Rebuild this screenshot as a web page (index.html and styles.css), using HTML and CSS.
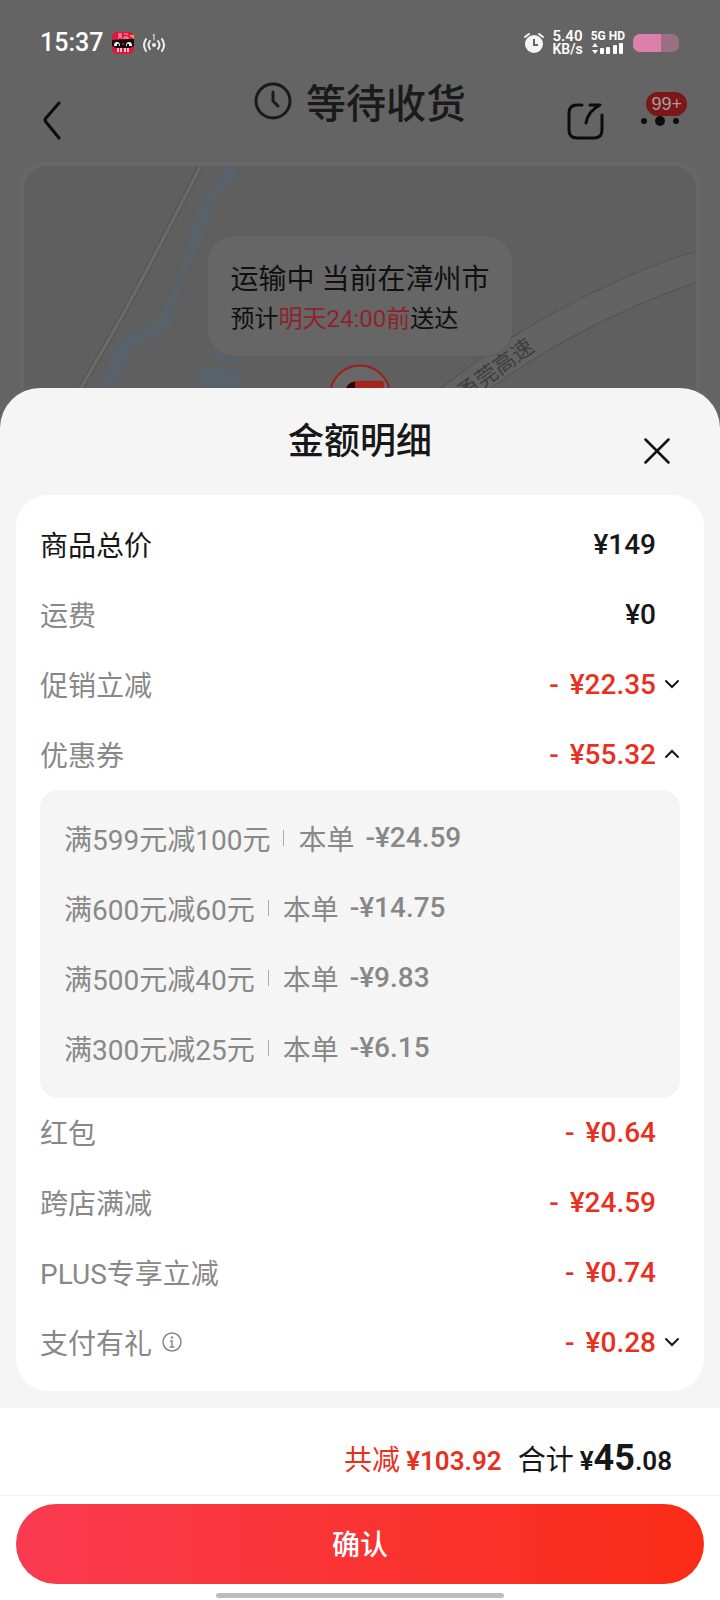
FILE: index.html
```html
<!DOCTYPE html>
<html lang="zh-CN">
<head>
<meta charset="utf-8">
<meta name="viewport" content="width=device-width, initial-scale=1">
<title>金额明细</title>
<link rel="stylesheet" href="styles.css">
</head>
<body>
<div class="screen">
  <section class="order">
    <div class="status">
      <div class="status-side">
        <span class="time">15:37</span>
        <svg class="mascot" width="24" height="24" viewBox="0 0 24 24" aria-hidden="true">
          <rect x="1" y="1" width="22" height="22" rx="5" fill="#e3173e"/>
          <path d="M18 4l5 0v4z" fill="#e8a33a"/>
          <path d="M7 3h4M7 5h4M9 3v2l-2 3M9 5l2 3M13 3h4M13 6h4v2h-4z" stroke="#f7a6b4" fill="none"/>
          <path d="M1 9q11-1 22-1v7l-4 2H5l-4-2z" fill="#15090c"/>
          <path d="M3 15q0-4 3-4t3 4zM15 15q0-4 3-4t3 4z" fill="#fff"/>
          <circle cx="7" cy="14" r="1.200" fill="#15090c"/><circle cx="17" cy="14" r="1.200" fill="#15090c"/>
          <circle cx="12" cy="13" r="1" fill="#e3173e"/>
          <path d="M7 17v4M10 17v4M14 17v4M17 17v4" stroke="#fff" stroke-width="1.500"/>
        </svg>
        <svg width="22" height="22" viewBox="0 0 22 22" fill="none" stroke="#eee" stroke-width="2" stroke-linecap="round" aria-hidden="true">
          <circle cx="11" cy="13" r="2" fill="#eee" stroke="none"/>
          <path d="M7 9q-3 4 0 8M15 9q3 4 0 8M3 7q-4 6 0 12M19 7q4 6 0 12"/>
          <path d="M10 3l1-1v6" stroke-width="1"/>
        </svg>
      </div>
      <div class="status-side">
        <svg width="20" height="22" viewBox="0 0 20 22" aria-hidden="true">
          <circle cx="10" cy="12" r="9" fill="#f4f4f4"/>
          <path d="M1 5l4-3M19 5l-4-3" stroke="#f4f4f4" stroke-width="2" stroke-linecap="round"/>
          <path d="M10 7v6h4" stroke="#646464" stroke-width="2" fill="none"/>
        </svg>
        <div class="speed"><span class="speed-num">5.40</span><span>KB/s</span></div>
        <div class="network">
          <span>5G HD</span>
          <svg width="32" height="12" viewBox="0 0 32 12" fill="#fff" aria-hidden="true">
            <path d="M4 0l3 4H1zM4 11L1 7h6z"/>
            <rect x="9" y="5" width="4" height="6" rx="1"/><rect x="15" y="4" width="4" height="7" rx="1"/><rect x="22" y="2" width="4" height="9" rx="1"/><rect x="28" y="0" width="4" height="11" rx="1"/>
          </svg>
        </div>
        <div class="battery"><div class="battery-level"></div></div>
      </div>
    </div>

    <header class="topbar">
      <button class="icon-btn back" type="button" aria-label="返回">
        <svg width="18" height="40" viewBox="0 0 18 40" fill="none" stroke="#0c0c0c" stroke-width="3" stroke-linecap="round" stroke-linejoin="round"><path d="M16 3L3 18q-2 2 0 4l13 16"/></svg>
      </button>
      <h1 class="order-state">
        <svg width="38" height="38" viewBox="0 0 38 38" fill="none" stroke="#1a1a1a" stroke-width="3" stroke-linecap="round" stroke-linejoin="round" aria-hidden="true"><circle cx="19" cy="19" r="17"/><path d="M19 10v9l5 5"/></svg>
        等待收货
      </h1>
      <div class="actions">
        <button class="icon-btn" type="button" aria-label="分享">
          <svg width="38" height="38" viewBox="0 0 38 38" fill="none" stroke="#0c0c0c" stroke-width="3" stroke-linecap="round" stroke-linejoin="round"><path d="M16 3h-5Q3 3 3 11v17q0 8 8 8h17q8 0 8-8V13M24 3h10Q22 9 20 21"/></svg>
        </button>
        <button class="icon-btn more" type="button" aria-label="更多">
          <svg width="40" height="12" viewBox="0 0 40 12" fill="#0c0c0c"><circle cx="4" cy="6" r="3"/><circle cx="20" cy="6" r="5"/><circle cx="36" cy="6" r="3"/></svg>
          <span class="badge">99+</span>
        </button>
      </div>
    </header>

    <div class="map">
      <svg class="map-art" viewBox="25 166 670 262" preserveAspectRatio="xMidYMin slice" aria-hidden="true">
        <path d="M225 166H238Q236 175 231 181Q219 190 216 197Q213 215 208 224Q202 240 195 254Q182 278 178 296Q173 312 172 322Q168 331 157 335Q142 341 133 350Q122 363 116 392H101Q108 358 120 342Q130 332 145 327Q163 319 167 305Q175 288 181 270Q187 255 190 240Q193 224 198 212Q204 199 210 194Q220 180 225 166Z" fill="#59616a"/>
        <path d="M214 350l27 4v9q-15 0-25-3zM199 369q5-3 20-1 15 0 21 5v55h-41z" fill="#59616a"/>
        <path d="M201 166q-27 53-51 99-28 54-70 125" fill="none" stroke="#575757" stroke-width="6"/>
        <path d="M201 166q-27 53-51 99-28 54-70 125" fill="none" stroke="#6a6a6a" stroke-width="3"/>
        <path d="M437 410q65-54 130-88 66-36 130-56" fill="none" stroke="#525252" stroke-width="31"/>
        <path d="M437 410q65-54 130-88 66-36 130-56" fill="none" stroke="#636363" stroke-width="29"/>
        <text class="road-name" transform="translate(464 401) rotate(-36)">甬莞高速</text>
        <circle cx="360" cy="395" r="30" fill="#676767" stroke="#9c1f1a" stroke-width="2"/>
        <path d="M345 395q0-15 14-15h23q2 0 2 3v17h-39z" fill="#a8251f"/>
        <path d="M345 395q0-13 10-14v10z" fill="#240a0a"/>
      </svg>
      <div class="tip">
        <p class="tip-main">运输中 当前在漳州市</p>
        <p class="tip-sub">预计<em>明天24:00前</em>送达</p>
      </div>
    </div>
  </section>

  <main class="sheet" role="dialog" aria-labelledby="sheet-title">
    <div class="sheet-head">
      <h2 id="sheet-title">金额明细</h2>
      <button class="icon-btn close" type="button" aria-label="关闭">
        <svg width="26" height="26" viewBox="0 0 26 26" fill="none" stroke="#111" stroke-width="2.500" stroke-linecap="round"><path d="M1.500 1.500l23 23M24.500 1.500l-23 23"/></svg>
      </button>
    </div>

    <div class="card">
      <div class="row strong"><span class="label">商品总价</span><span class="value">¥149</span></div>
      <div class="row"><span class="label">运费</span><span class="value">¥0</span></div>
      <div class="row cut"><span class="label">促销立减</span><span class="value"><span>-</span><span>¥22.35</span></span>
        <button class="icon-btn toggle" type="button" aria-label="展开促销立减" aria-expanded="false"><svg width="16" height="10" viewBox="0 0 16 10"><path d="M2 2l6 6 6-6"/></svg></button></div>
      <div class="row cut"><span class="label">优惠券</span><span class="value"><span>-</span><span>¥55.32</span></span>
        <button class="icon-btn toggle" type="button" aria-label="收起优惠券" aria-expanded="true"><svg width="16" height="10" viewBox="0 0 16 10"><path d="M2 8l6-6 6 6"/></svg></button></div>
      <ul class="coupons">
        <li>满599元减100元<i class="bar"></i>本单<b>-¥24.59</b></li>
        <li>满600元减60元<i class="bar"></i>本单<b>-¥14.75</b></li>
        <li>满500元减40元<i class="bar"></i>本单<b>-¥9.83</b></li>
        <li>满300元减25元<i class="bar"></i>本单<b>-¥6.15</b></li>
      </ul>
      <div class="row cut"><span class="label">红包</span><span class="value"><span>-</span><span>¥0.64</span></span></div>
      <div class="row cut"><span class="label">跨店满减</span><span class="value"><span>-</span><span>¥24.59</span></span></div>
      <div class="row cut"><span class="label">PLUS专享立减</span><span class="value"><span>-</span><span>¥0.74</span></span></div>
      <div class="row cut"><span class="label">支付有礼
        <button class="icon-btn" type="button" aria-label="支付有礼说明"><svg width="20" height="20" viewBox="0 0 20 20" fill="none" stroke="#888" stroke-width="1.500"><circle cx="10" cy="10" r="9"/><path d="M8 9h2v6M7.500 15h5"/><circle cx="10" cy="5.500" r="1.200" fill="#888" stroke="none"/></svg></button></span><span class="value"><span>-</span><span>¥0.28</span></span>
        <button class="icon-btn toggle" type="button" aria-label="展开支付有礼" aria-expanded="false"><svg width="16" height="10" viewBox="0 0 16 10"><path d="M2 2l6 6 6-6"/></svg></button></div>
    </div>

    <footer class="footer">
      <div class="summary">
        <p class="saved">共减<b>¥103.92</b></p>
        <p class="total">合计<b>¥<strong>45</strong>.08</b></p>
      </div>
      <div class="confirm-wrap">
        <button class="confirm" type="button">确认</button>
        <div class="home-bar"></div>
      </div>
    </footer>
  </main>
</div>
</body>
</html>
```

FILE: styles.css
```css
* { box-sizing: border-box; }

body {
  margin: 0;
  background: #646464;
  color: #171717;
  font-family: Roboto, "Noto Sans CJK SC", sans-serif;
  font-size: 28px;
}

h1, h2, p, ul { margin: 0; padding: 0; }

svg { display: block; }

.screen {
  display: flex;
  flex-direction: column;
  min-height: 100vh;
}

.icon-btn {
  display: flex;
  padding: 0;
  border: 0;
  background: none;
  cursor: pointer;
}

/* Order page behind the sheet */
.order {
  display: flex;
  flex-direction: column;
  height: 428px;
  overflow: hidden;
  background: #646464;
}

.status {
  display: flex;
  justify-content: space-between;
  align-items: center;
  height: 72px;
  padding: 14px 41px 0 40px;
  color: #fff;
}

.status-side { display: flex; align-items: center; gap: 8px; }

.time { font-size: 25px; font-weight: 500; line-height: 32px; }

.speed {
  display: flex;
  flex-direction: column;
  align-items: center;
  font-size: 14px;
  font-weight: 600;
  line-height: 13px;
}

.speed-num { font-size: 15px; }

.network {
  display: flex;
  flex-direction: column;
  gap: 1px;
  font-size: 12px;
  font-weight: 700;
  line-height: 11px;
}

.battery {
  width: 46px;
  height: 18px;
  overflow: hidden;
  border-radius: 7px;
  background: #9b7084;
}

.battery-level { width: 60%; height: 100%; background: #dc80aa; }

.topbar {
  display: grid;
  grid-template-columns: 1fr auto 1fr;
  height: 90px;
  padding: 0 32px;
}

.back { align-self: start; margin: 28px 0 0 11px; }

.order-state {
  display: flex;
  align-items: center;
  gap: 14px;
  height: 57px;
  color: #1a1a1a;
  font-size: 40px;
  font-weight: 500;
}

.actions {
  display: flex;
  justify-content: flex-end;
  gap: 36px;
  margin-top: 29px;
}

.actions .icon-btn { align-items: center; height: 40px; }

.more { position: relative; padding-right: 8px; }

.badge {
  position: absolute;
  top: -9px;
  right: 1px;
  padding: 0 5px;
  border-radius: 12px;
  background: #7d1717;
  color: #a5a0a0;
  font-size: 18px;
  line-height: 24px;
}

.map {
  position: relative;
  display: flex;
  flex: 1;
  justify-content: center;
  align-items: flex-start;
  margin: 0 20px;
  padding-top: 70px;
  overflow: hidden;
  border: 4px solid #676767;
  border-bottom: 0;
  border-radius: 26px 26px 0 0;
  background: #5f5f5f;
}

.map-art { position: absolute; inset: 0; width: 100%; height: 100%; }

.road-name { fill: #3e3e3e; font-size: 22px; }

.tip {
  position: relative;
  padding: 23px 23px 19px;
  border-radius: 26px;
  background: #666;
  box-shadow: 0 0 0 1px #5b5b5b;
  color: #101010;
}

.tip-main { font-size: 28px; line-height: 42px; }
.tip-sub { font-size: 24px; line-height: 36px; }
.tip-sub em { color: #8e2429; font-style: normal; }

/* Bottom sheet */
.sheet {
  position: relative;
  display: flex;
  flex: 1;
  flex-direction: column;
  margin-top: -40px;
  border-radius: 40px 40px 0 0;
  background: #f5f5f5;
}

.sheet-head {
  display: grid;
  grid-template-columns: 1fr auto 1fr;
  height: 107px;
  padding: 0 50px;
}

.sheet-head h2 {
  grid-column: 2;
  font-size: 36px;
  font-weight: 500;
  line-height: 108px;
}

.close { justify-self: end; align-self: start; margin-top: 50px; }

.card {
  margin: 0 16px;
  padding: 15px 24px 13px;
  border-radius: 32px;
  background: #fff;
}

.row {
  display: flex;
  align-items: center;
  height: 70px;
  padding: 0 24px 2px 0;
}

.label { display: flex; align-items: center; gap: 10px; color: #888; }
.strong .label { color: #171717; }

.value { display: flex; gap: 11px; margin-left: auto; font-weight: 500; }
.cut .value { color: #e8301f; }

.toggle { margin: 0 -24px 0 8px; }
.toggle svg { fill: none; stroke: #171717; stroke-width: 2; stroke-linecap: round; }

.coupons {
  padding: 14px 24px;
  border-radius: 18px;
  background: #f5f5f5;
  color: #888;
  list-style: none;
}

.coupons li {
  display: flex;
  align-items: center;
  height: 70px;
  padding-bottom: 3px;
}

.coupons b { margin-left: 11px; font-weight: 500; }

.bar { width: 1px; height: 16px; margin: 0 14px 0 13px; background: #aaa; }

.footer { margin-top: auto; background: #fff; }

.summary {
  display: flex;
  flex-wrap: wrap;
  justify-content: flex-end;
  align-items: baseline;
  gap: 0 16px;
  padding: 26px 48px 10px;
  line-height: 48px;
}

.summary b { margin-left: 6px; font-size: 26px; font-weight: 600; }
.summary strong { font-size: 36px; font-weight: 700; }
.saved { color: #e8301f; }

.confirm-wrap {
  padding: 8px 16px 2px;
  border-top: 1px solid #f2f2f2;
}

.confirm {
  display: block;
  width: 100%;
  height: 80px;
  padding-bottom: 4px;
  border: 0;
  border-radius: 40px;
  background: linear-gradient(90deg, #f93b50, #fb2c16);
  color: #fff;
  font: inherit;
  font-weight: 500;
}

.home-bar {
  width: 40%;
  min-width: 288px;
  height: 5px;
  margin: 9px auto 0;
  border-radius: 3px;
  background: #bdbdbd;
}
```
